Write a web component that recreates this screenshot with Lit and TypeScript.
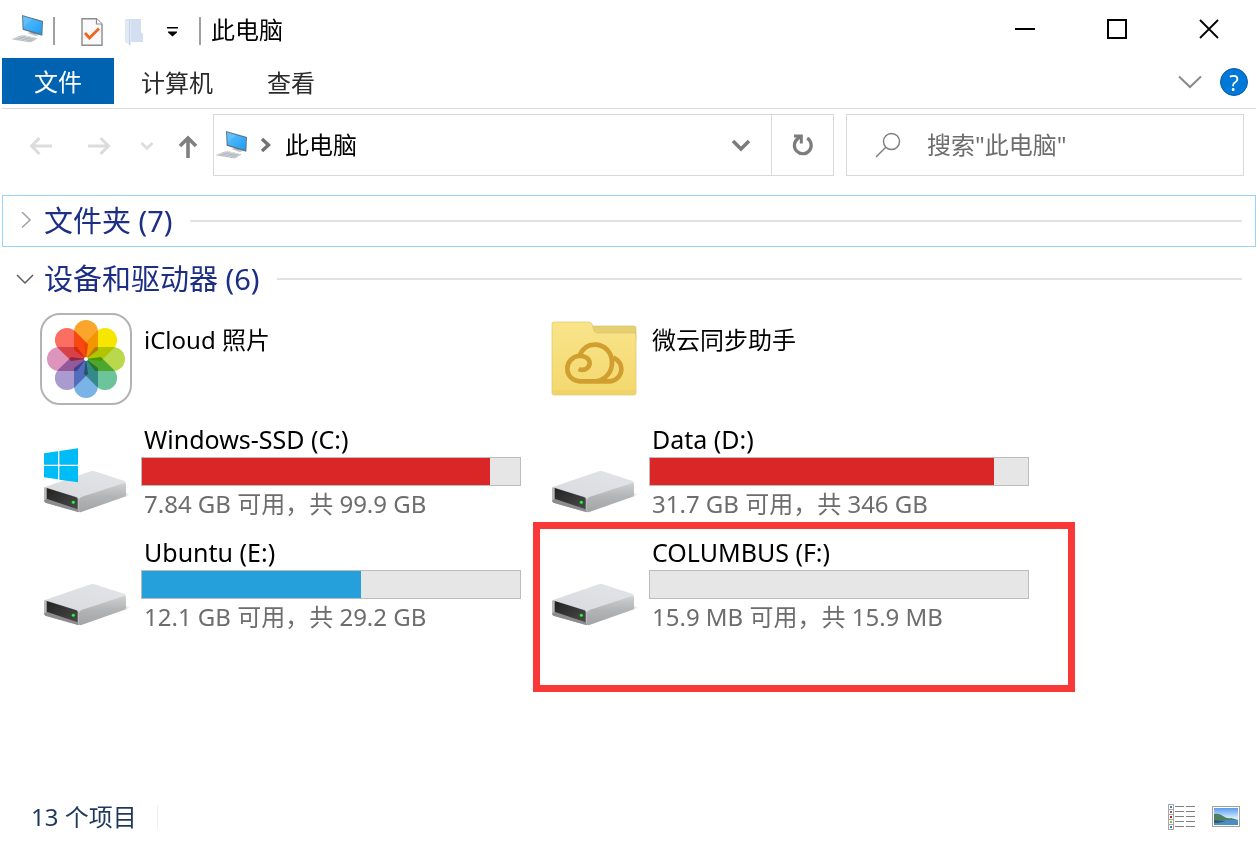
import { LitElement, html, css, svg, nothing } from "lit";
import { customElement, property, state } from "lit/decorators.js";

type IconName = "photos" | "cloud-folder" | "drive" | "system-drive";

interface Item {
  name: string;
  icon: IconName;
  used?: number;
  full?: boolean;
  detail?: string;
  marked?: boolean;
}

const ITEMS: Item[] = [
  { name: "iCloud 照片", icon: "photos" },
  { name: "微云同步助手", icon: "cloud-folder" },
  { name: "Windows-SSD (C:)", icon: "system-drive", used: 92, full: true, detail: "7.84 GB 可用，共 99.9 GB" },
  { name: "Data (D:)", icon: "drive", used: 91, full: true, detail: "31.7 GB 可用，共 346 GB" },
  { name: "Ubuntu (E:)", icon: "drive", used: 58, detail: "12.1 GB 可用，共 29.2 GB" },
  { name: "COLUMBUS (F:)", icon: "drive", used: 0, detail: "15.9 MB 可用，共 15.9 MB", marked: true },
];

const PETALS = ["#fba52c", "#f6e600", "#b9d84c", "#6cc49a", "#7ab4e6", "#a99bd0", "#dd94bd", "#fb6f62"];

const pcIcon = () => html`
  <svg width="32" height="32" viewBox="36 42 96 96" aria-hidden="true">
    <defs>
      <linearGradient id="scr" x1="0" y1="0" x2="1" y2="1">
        <stop offset="0" stop-color="#59bdfb" />
        <stop offset=".5" stop-color="#3fb0fa" />
        <stop offset="1" stop-color="#1f9bf0" />
      </linearGradient>
    </defs>
    <path d="M82 102 L96 97 L120 106 L108 112 Z" fill="#c3c9ce" />
    <path d="M92 94 L106 98 L106 106 L92 102 Z" fill="#9aa3aa" />
    <path d="M66 48 L129 66 L127 110 L68 92 Z" fill="#5e7384" />
    <path d="M69 52 L126 69 L124 105 L71 89 Z" fill="url(#scr)" />
    <path d="M69 52 L98 60 L72 82 Z" fill="#8ad2fc" opacity=".3" />
    <path d="M37 120 L66 107 L111 118 L92 129 Z" fill="#d5d9dc" />
    <path d="M37 120 L92 129 L111 118 M45 117 L98 125 M54 113 L104 121 M52 122 L78 110 M66 124 L92 113 M80 127 L104 116" stroke="#a9b0b5" stroke-width="2" fill="none" />
  </svg>`;

const driveIcon = (system: boolean) => html`
  <svg class="pic" viewBox="0 0 96 96" aria-hidden="true">
    <defs>
      <linearGradient id="top" x1="0" y1="1" x2="1" y2="0">
        <stop offset="0" stop-color="#d9dadd" /><stop offset="1" stop-color="#e3e4e8" />
      </linearGradient>
      <linearGradient id="side" x1="0" y1="0" x2="0" y2="1">
        <stop offset="0" stop-color="#cfd0d2" /><stop offset=".45" stop-color="#b4b5b7" /><stop offset="1" stop-color="#a3a4a6" />
      </linearGradient>
      <linearGradient id="front" x1="0" y1="0" x2="1" y2="1">
        <stop offset="0" stop-color="#222" /><stop offset="1" stop-color="#4a4a4a" />
      </linearGradient>
      <linearGradient id="shade" x1="0" y1="0" x2="1" y2="0">
        <stop offset="0" stop-color="#dcdcdc" /><stop offset="1" stop-color="#fff" />
      </linearGradient>
    </defs>
    <g transform="translate(-7 -4) scale(.33333)">
      <path d="M284 219 L303 222 L284 232 Z" fill="url(#shade)" />
      <path d="M42 206 Q42 202 47 200 L182 154 Q188 152 194 154 L282 182 Q288 184 288 190 L280 200 L147 240 L44 208 Z" fill="url(#top)" />
      <path d="M147 240 Q148 233 156 230 L280 190 Q288 187 288 194 L288 224 Q288 229 282 231 L154 276 Q147 278 147 272 Z" fill="url(#side)" />
      <path d="M42 205 Q42 201 47 202 L140 231 Q147 233 147 240 L147 277 L46 248 Q42 246 42 242 Z" fill="#b9babb" />
      <path d="M50 204 L139 232 Q143 234 143 238 L143 269 L53 241 Q50 240 50 237 Z" fill="url(#front)" />
      <path d="M42 242 L50 236 L143 268 L147 277 L46 248 Z" fill="#8b8c8e" />
      <circle cx="130" cy="247" r="6" fill="#16851c" />
      <circle cx="130" cy="247" r="4" fill="#3cf545" />
      ${system
        ? svg`<path fill="#00bcf6" d="M42 100 L84 94 V134 H42 Z M88 93 L144 85 V134 H88 Z M42 138 H84 V178 L42 172 Z M88 138 H144 V187 L88 179 Z" />`
        : nothing}
    </g>
  </svg>`;

const photosIcon = () => html`
  <svg class="pic" viewBox="0 0 96 96" aria-hidden="true">
    <rect x="4" y="3" width="90" height="90" rx="19" fill="#fff" stroke="#b3b3b3" stroke-width="2" />
    <g class="petals" transform="translate(49 48)">
      ${PETALS.map(
        (c, i) => svg`<path transform=${`rotate(${i * 45})`} fill=${c}
          d="M0 0 L-12 -9 V-27 A12 12 0 0 1 12 -27 V-9 Z" />`
      )}
    </g>
    <circle cx="49" cy="48" r="2" fill="#fff" />
  </svg>`;

const cloudFolderIcon = () => html`
  <svg class="pic" viewBox="0 0 96 96" aria-hidden="true">
    <defs>
      <linearGradient id="fold" x1="0" y1="0" x2="0" y2="1">
        <stop offset="0" stop-color="#f9e48b" /><stop offset="1" stop-color="#f3d86e" />
      </linearGradient>
    </defs>
    <path d="M40 15 H89 Q91 15 91 17 V30 H40 Z" fill="#e5cf73" stroke="#d6bd5c" stroke-width=".6" />
    <path d="M7 13 Q7 11 9 11 H44 Q46 11 47 13 L49 20 Q50 22 52 22 H89 Q91 22 91 24 V82 Q91 84 89 84 H9 Q7 84 7 82 Z" fill="url(#fold)" stroke="#e0c668" stroke-width=".7" />
    <path d="M8 80 H90 M8 82 H90" stroke="#e8c75c" stroke-width=".6" />
    <g transform="translate(-15 -11) scale(.33333)" fill="none" stroke="#d09f2f" stroke-width="14">
      <path d="M146 207 Q160 214 172 204 Q184 192 176 179 Q166 167 148 168 A37 38 0 0 0 112 206 A38 38 0 0 0 152 244 H236 A38 36 0 0 0 274 206 Q273 184 250 173" />
      <path d="M149 165 C160 142 178 134 194 134 C225 134 246 158 246 188 C246 215 228 238 200 244" />
    </g>
  </svg>`;

const PICS: Record<IconName, () => unknown> = {
  photos: photosIcon,
  "cloud-folder": cloudFolderIcon,
  drive: () => driveIcon(false),
  "system-drive": () => driveIcon(true),
};

@customElement("drive-tile")
class DriveTile extends LitElement {
  @property({ attribute: false }) item!: Item;

  static styles = css`
    :host { display: block; position: relative; }
    .tile { display: grid; grid-template-columns: 96px minmax(0, 1fr); column-gap: 8px; }
    .pic { display: block; width: 96px; height: 96px; }
    .petals path { mix-blend-mode: multiply; }
    .petals { isolation: isolate; }
    .plain { padding-top: 14px; }
    .name, .detail { padding-left: 3px; line-height: 30px; white-space: nowrap; }
    .name { color: #000; }
    .volume .name { font-size: 25px; }
    .detail { color: #6d6d6d; }
    .bar { box-sizing: border-box; height: 29px; margin: 3px 0; border: 1px solid #bcbcbc; background: #e6e6e6; }
    .fill { height: 100%; background: #26a0da; }
    .fill.full { background: #da2626; }
    .mark { position: absolute; inset: -15px -46px -59px -12px; border: 7px solid #fb3838; pointer-events: none; }
  `;

  render() {
    const it = this.item;
    return html`
      <div class="tile">
        ${PICS[it.icon]()}
        <div class=${it.detail ? "volume" : "plain"}>
          <div class="name">${it.name}</div>
          ${it.detail
            ? html`<div class="bar" role="meter" aria-label=${it.name} aria-valuemin="0" aria-valuemax="100" aria-valuenow=${it.used}>
                  <div class="fill ${it.full ? "full" : ""}" style="width:${it.used}%"></div>
                </div>
                <div class="detail">${it.detail}</div>`
            : nothing}
        </div>
      </div>
      ${it.marked ? html`<div class="mark"></div>` : nothing}
    `;
  }
}

@customElement("app-root")
class AppRoot extends LitElement {
  @state() private foldersOpen = false;
  @state() private devicesOpen = true;

  static styles = css`
    :host {
      display: flex; flex-direction: column; min-height: 100vh; box-sizing: border-box;
      background: #fff; color: #000;
      font: 24px/30px "Noto Sans", "Noto Sans CJK SC", sans-serif;
    }
    * { box-sizing: border-box; }
    button, input { font: inherit; color: inherit; background: none; border: 0; padding: 0; margin: 0; border-radius: 0; }
    svg { display: block; flex: none; }
    .titlebar { display: flex; align-items: center; height: 58px; padding: 0 3px 0 12px; }
    .sep { width: 2px; height: 28px; margin: 4px 0 0; background: #a0a0a0; }
    .titlebar .sep:first-of-type { margin-left: 9px; }
    .quick { display: flex; align-items: center; margin-left: 26px; gap: 21px; padding-top: 6px; }
    .quick + .sep { margin-left: 20px; }
    .title { flex: 1; margin: 0; padding: 2px 0 0 10px; font-size: 24px; font-weight: 400; }
    .winbtn { display: flex; align-items: center; justify-content: center; width: 92px; height: 58px; }
    .ribbon { display: flex; align-items: center; height: 51px; margin: 0 2px; padding-bottom: 4px; border-bottom: 1px solid #dadbdc; }
    .tab { height: 46px; padding: 4px 27px 0; color: #2b2b2b; }
    .tab.file { width: 112px; padding: 2px 0 0; background: #0063b1; color: #fff; }
    .ribbon-end { display: flex; align-items: center; gap: 18px; margin-left: auto; padding: 2px 8px 0 0; }
    .help {
      display: flex; align-items: center; justify-content: center; width: 28px; height: 28px;
      border: 1px solid #0a5ca8; border-radius: 50%; background: #0078d7; color: #fff; font-size: 22px; line-height: 26px;
    }
    .nav { display: flex; align-items: center; padding: 5px 14px 5px 12px; }
    .navbtn { display: flex; align-items: center; justify-content: center; width: 58px; height: 62px; padding-top: 2px; }
    .navbtn.small { width: 38px; }
    .navbtn.up { width: 44px; }
    .address { display: flex; align-items: stretch; flex: 619 1 0; min-width: 0; height: 62px; margin: 0 12px 0 3px; border: 1px solid #d9d9d9; }
    .crumbs { display: flex; align-items: center; flex: 1; padding-left: 2px; }
    .crumbs .arrow { margin: 0 13px 0 12px; }
    .drop { display: flex; align-items: center; justify-content: center; width: 60px; }
    .reload { display: flex; align-items: center; justify-content: center; width: 62px; border-left: 1px solid #d9d9d9; }
    .search { display: flex; align-items: center; flex: 340 1 0; min-width: 0; height: 62px; padding: 0 28px; border: 1px solid #d9d9d9; gap: 26px; }
    .search input { flex: 1; min-width: 0; outline: none; }
    .search input::placeholder { color: #6d6d6d; opacity: 1; }
    main { flex: 1; padding: 14px 2px 0; }
    .group { display: flex; align-items: center; width: 100%; height: 52px; padding: 0 13px; border: 1px solid transparent; color: #1c2f85; font-size: 29px; line-height: 36px; text-align: left; }
    .group.focus { border-color: #99d1ff; }
    .group + .group { margin-top: 6px; }
    .group .label { margin: 0 17px 0 10px; white-space: nowrap; }
    .rule { flex: 1; height: 2px; background: #e2e2e2; }
    .items { display: grid; grid-template-columns: repeat(auto-fill, 484px); gap: 17px 24px; padding: 6px 0 0 35px; }
    .status { display: flex; align-items: center; height: 50px; padding: 0 18px 0 31px; color: #1e395b; }
    .status .count { padding-right: 20px; border-right: 1px solid #eee; line-height: 24px; }
    .views { display: flex; align-items: center; gap: 16px; margin-left: auto; }
  `;

  private group(label: string, open: boolean, focus: boolean, toggle: () => void) {
    return html`<button class="group ${focus ? "focus" : ""}" aria-expanded=${open} @click=${toggle}>
      <svg width="18" height="18" viewBox="0 0 18 18" fill="none" stroke=${open ? "#5c5c5c" : "#a0a0a0"} stroke-width="1.5">
        ${open ? svg`<path d="M1 5 L9 13 L17 5" />` : svg`<path d="M6 0 L14 8 L6 15.5" />`}
      </svg>
      <span class="label">${label}</span><span class="rule"></span>
    </button>`;
  }

  render() {
    return html`
      <header class="titlebar">
        ${pcIcon()}
        <span class="sep"></span>
        <div class="quick">
          <button aria-label="属性">
            <svg width="22" height="28" viewBox="0 0 22 28">
              <path d="M1 .8 H15.5 L21 6 V27.2 H1 Z" fill="#f9f9f9" stroke="#8c8c8c" stroke-width="1.4" />
              <path d="M15.5 .8 V6 H21" fill="#fff" stroke="#8c8c8c" stroke-width="1.2" />
              <path d="M4 15 L8.5 20 L18 10.5" fill="none" stroke="#f26419" stroke-width="2.8" />
            </svg>
          </button>
          <button aria-label="新建文件夹">
            <svg width="20" height="28" viewBox="0 0 20 28">
              <path d="M2 1 H17 V14 L19 16 V24 H5 Z" fill="#d3dff0" />
              <path d="M1 1 L7 4 V27.5 L1 24 Z" fill="#e1e9f5" />
              <path d="M6 3.5 V27.5 L5 27 V3 Z" fill="#c3d2e8" />
            </svg>
          </button>
          <button aria-label="自定义快速访问工具栏">
            <svg width="14" height="12" viewBox="0 0 14 12"><path d="M2 1 H13 V2.5 H2 Z M3 5.5 H12 V6.5 L7.5 10.5 L3 6.5 Z" /></svg>
          </button>
        </div>
        <span class="sep"></span>
        <h1 class="title">此电脑</h1>
        <button class="winbtn" aria-label="最小化"><svg width="20" height="20"><path d="M0 10 H20" stroke="#000" stroke-width="2" /></svg></button>
        <button class="winbtn" aria-label="最大化"><svg width="20" height="20"><rect x="1" y="1" width="18" height="18" fill="none" stroke="#000" stroke-width="2" /></svg></button>
        <button class="winbtn" aria-label="关闭"><svg width="20" height="20"><path d="M1 1 L19 19 M19 1 L1 19" stroke="#000" stroke-width="1.8" /></svg></button>
      </header>

      <div class="ribbon">
        <button class="tab file">文件</button>
        <button class="tab">计算机</button>
        <button class="tab">查看</button>
        <div class="ribbon-end">
          <button aria-label="展开功能区"><svg width="24" height="14" viewBox="0 0 24 14"><path d="M1 1.5 L12 12 L23 1.5" fill="none" stroke="#8a8a8a" stroke-width="2" /></svg></button>
          <button class="help" aria-label="帮助">?</button>
        </div>
      </div>

      <nav class="nav">
        <button class="navbtn" aria-label="后退"><svg width="24" height="20" viewBox="0 0 24 20"><path d="M23 10 H3 M10.5 2 L2.5 10 L10.5 18" fill="none" stroke="#dcdcdc" stroke-width="3" /></svg></button>
        <button class="navbtn" aria-label="前进"><svg width="24" height="20" viewBox="0 0 24 20"><path d="M1 10 H21 M13.5 2 L21.5 10 L13.5 18" fill="none" stroke="#dcdcdc" stroke-width="3" /></svg></button>
        <button class="navbtn small" aria-label="最近浏览的位置"><svg width="14" height="10" viewBox="0 0 14 10"><path d="M1.5 2 L7 7.5 L12.5 2" fill="none" stroke="#dcdcdc" stroke-width="2.6" /></svg></button>
        <button class="navbtn up" aria-label="上移"><svg width="20" height="24" viewBox="0 0 20 24"><path d="M10 24 V4 M2 12 L10 4 L18 12" fill="none" stroke="#808080" stroke-width="3.6" /></svg></button>
        <div class="address">
          <div class="crumbs">
            ${pcIcon()}
            <svg class="arrow" width="12" height="16" viewBox="0 0 12 16"><path d="M2 2 L8.5 8 L2 14" fill="none" stroke="#737373" stroke-width="3.4" /></svg>
            <button>此电脑</button>
          </div>
          <button class="drop" aria-label="以前的位置"><svg width="20" height="14" viewBox="0 0 20 14"><path d="M2 3 L10 11 L18 3" fill="none" stroke="#7c7c7c" stroke-width="3.6" /></svg></button>
          <button class="reload" aria-label="刷新">
            <svg width="22" height="24" viewBox="0 0 22 24">
              <path d="M15.2 5.2 A8.4 8.4 0 1 1 5.8 5.6" fill="none" stroke="#7c7c7c" stroke-width="3.2" />
              <path d="M2 1.5 H10.8 V10.5 H7.8 V6 L5.6 7.6 L3.6 5.4 L5 4.4 H2 Z" fill="#7c7c7c" />
            </svg>
          </button>
        </div>
        <label class="search">
          <svg width="26" height="26" viewBox="0 0 26 26"><g fill="none" stroke="#7c7c7c" stroke-width="1.4"><circle cx="16.5" cy="9.5" r="8" /><path d="M10.8 15.2 L1 25" /></g></svg>
          <input type="text" aria-label="搜索" placeholder='搜索"此电脑"' />
        </label>
      </nav>

      <main>
        ${this.group("文件夹 (7)", this.foldersOpen, true, () => (this.foldersOpen = !this.foldersOpen))}
        ${this.group("设备和驱动器 (6)", this.devicesOpen, false, () => (this.devicesOpen = !this.devicesOpen))}
        ${this.devicesOpen
          ? html`<section class="items">${ITEMS.map((item) => html`<drive-tile .item=${item}></drive-tile>`)}</section>`
          : nothing}
      </main>

      <footer class="status">
        <span class="count">13 个项目</span>
        <div class="views">
          <button aria-label="详细信息">
            <svg width="28" height="26" viewBox="0 0 28 26">
              ${["#3f7fd0", "#c0504d", "#d02020", "#7fb848", "#3f7fd0"].map(
                (c, i) => svg`<g transform=${`translate(0 ${i * 5})`}>
                  <rect x=".5" y=".5" width="5" height="5" fill="#fff" stroke="#a6a6a6" />
                  <rect x="2" y="2" width="2" height="2" fill=${c} />
                  <path d="M7 2.5 H16 M18 2.5 H27" stroke="#7f7f7f" />
                </g>`
              )}
            </svg>
          </button>
          <button aria-label="大缩略图">
            <svg width="28" height="22" viewBox="0 0 28 22">
              <defs><linearGradient id="sky" x1="0" y1="0" x2="0" y2="1"><stop offset="0" stop-color="#5a9cf0" /><stop offset=".6" stop-color="#d5ecff" /></linearGradient></defs>
              <rect x=".5" y=".5" width="27" height="20" fill="#fff" stroke="#a0a0a0" />
              <rect x="2" y="2" width="24" height="17" fill="url(#sky)" />
              <path d="M2 8 Q7 7 11 10 T19 12 L26 14 V15 H2 Z" fill="#4f8060" />
              <path d="M2 14 H26 V19 H2 Z" fill="#4b8cc4" />
              <path d="M2 14 L14 15 L6 17 H2 Z" fill="#2f5e66" />
            </svg>
          </button>
        </div>
      </footer>
    `;
  }
}
